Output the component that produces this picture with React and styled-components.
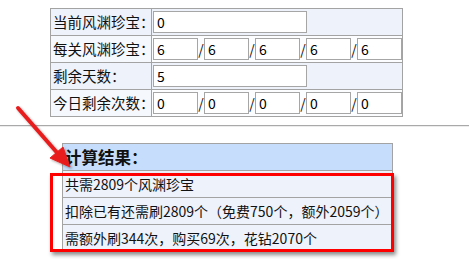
import React from 'react';
import styled, { createGlobalStyle } from 'styled-components';

const GlobalStyle = createGlobalStyle`
	html, body {
		margin: 0;
		padding: 0;
		background: #fff;
	}
	body {
		font-family: "Noto Sans CJK SC", "Liberation Sans", sans-serif;
		color: #111;
	}
`;

const inputRows = [
	{ label: '当前风渊珍宝：', values: ['0'] },
	{ label: '每关风渊珍宝：', values: ['6', '6', '6', '6', '6'] },
	{ label: '剩余天数：', values: ['5'] },
	{ label: '今日剩余次数：', values: ['0', '0', '0', '0', '0'] },
];

const results = [
	'共需2809个风渊珍宝',
	'扣除已有还需刷2809个（免费750个，额外2059个）',
	'需额外刷344次，购买69次，花钻2070个',
];

const App = () => {
	return (
		<Page>
			<GlobalStyle />
			<FormTable>
				<colgroup>
					<col style={{ width: 101 }} />
					<col />
				</colgroup>
				<tbody>
					{inputRows.map((row, i) => (
						<FormRow key={row.label} $odd={i % 2 === 0}>
							<Label $odd={i % 2 === 0}>{row.label}</Label>
							<Value>
								<Inputs>
									{row.values.length === 1 ? (
										<Field $wide defaultValue={row.values[0]} />
									) : (
										row.values.map((v, j) => (
											<React.Fragment key={j}>
												{j > 0 && <Slash>/</Slash>}
												<Field defaultValue={v} />
											</React.Fragment>
										))
									)}
								</Inputs>
							</Value>
						</FormRow>
					))}
				</tbody>
			</FormTable>

			<Divider />

			<ResultTable>
				<thead>
					<tr>
						<Head>计算结果：</Head>
					</tr>
				</thead>
				<tbody>
					{results.map((text) => (
						<tr key={text}>
							<ResultCell>{text}</ResultCell>
						</tr>
					))}
				</tbody>
			</ResultTable>

			<Highlight />
			<Arrow width='90' height='90' viewBox='0 0 90 90'>
				<defs>
					<filter id='sh' x='-20%' y='-20%' width='150%' height='150%'>
						<feDropShadow dx='1.5' dy='1.5' stdDeviation='1.2' floodColor='#000' floodOpacity='0.35' />
					</filter>
				</defs>
				<g filter='url(#sh)' fill='#e81d1d' stroke='#e81d1d'>
					<line x1='18' y1='8' x2='60' y2='56' strokeWidth='4' strokeLinecap='round' />
					<polygon points='70,67 50,58 63,47' strokeWidth='1' strokeLinejoin='round' />
				</g>
			</Arrow>
		</Page>
	);
};

const Page = styled.div`
	position: relative;
	width: 469px;
	height: 259px;
	overflow: hidden;
	padding-top: 8px;
	box-sizing: border-box;
`;

const FormTable = styled.table`
	margin-left: 50px;
	width: 353px;
	table-layout: fixed;
	border-collapse: collapse;
	border: 1px solid #a3a3a3;
	font-size: 14px;
`;

const FormRow = styled.tr`
	height: 27px;
	background: ${(p) => (p.$odd ? '#edf2fb' : '#fcfdfe')};
`;

const Label = styled.td`
	padding: 0 0 0 2px;
	border: 1px solid #a3a3a3;
	white-space: nowrap;
	overflow: visible;
	font-size: 14.5px;
	line-height: 18px;
	background: ${(p) => (p.$odd ? '#edf2fb' : '#f5f8fd')};
`;

const Value = styled.td`
	padding: 0 0 0 1px;
	border: 1px solid #a3a3a3;
`;

const Inputs = styled.div`
	display: flex;
	align-items: center;
`;

const Field = styled.input`
	box-sizing: border-box;
	width: ${(p) => (p.$wide ? '154px' : '45px')};
	height: 22px;
	margin: 0;
	padding: 0 3px;
	border: 1px solid #a6a6a6;
	background: #fff;
	font-family: "Noto Sans CJK SC", "Liberation Sans", sans-serif;
	font-size: 14px;
	color: #000;
	outline: none;
`;

const Slash = styled.span`
	width: 6px;
	text-align: center;
	font-size: 14px;
	line-height: 18px;
`;

const Divider = styled.div`
	margin-top: 8px;
	height: 0;
	border-top: 1px solid #a9a9a9;
	border-bottom: 1px solid #ececec;
`;

const ResultTable = styled.table`
	margin: 16px 0 0 62px;
	width: 331px;
	border-collapse: collapse;
	border: 1px solid #a3a3a3;

	tr {
		height: 27px;
	}
`;

const Head = styled.th`
	padding: 0 0 0 2px;
	text-align: left;
	background: #c6ddfb;
	border: 1px solid #a3a3a3;
	font-size: 16.5px;
	font-weight: bold;
	line-height: 20px;
`;

const ResultCell = styled.td`
	padding: 0 0 0 2px;
	background: #edf2fb;
	border: 1px solid #a3a3a3;
	font-size: 14px;
	line-height: 18px;
	white-space: nowrap;
`;

const Highlight = styled.div`
	position: absolute;
	left: 50px;
	top: 173px;
	width: 344px;
	height: 79px;
	box-sizing: border-box;
	border: 3px solid #ff0000;
	box-shadow: 2px 3px 4px rgba(0, 0, 0, 0.45);
`;

const Arrow = styled.svg`
	position: absolute;
	left: 0;
	top: 100px;
	overflow: visible;
`;

export default App;
